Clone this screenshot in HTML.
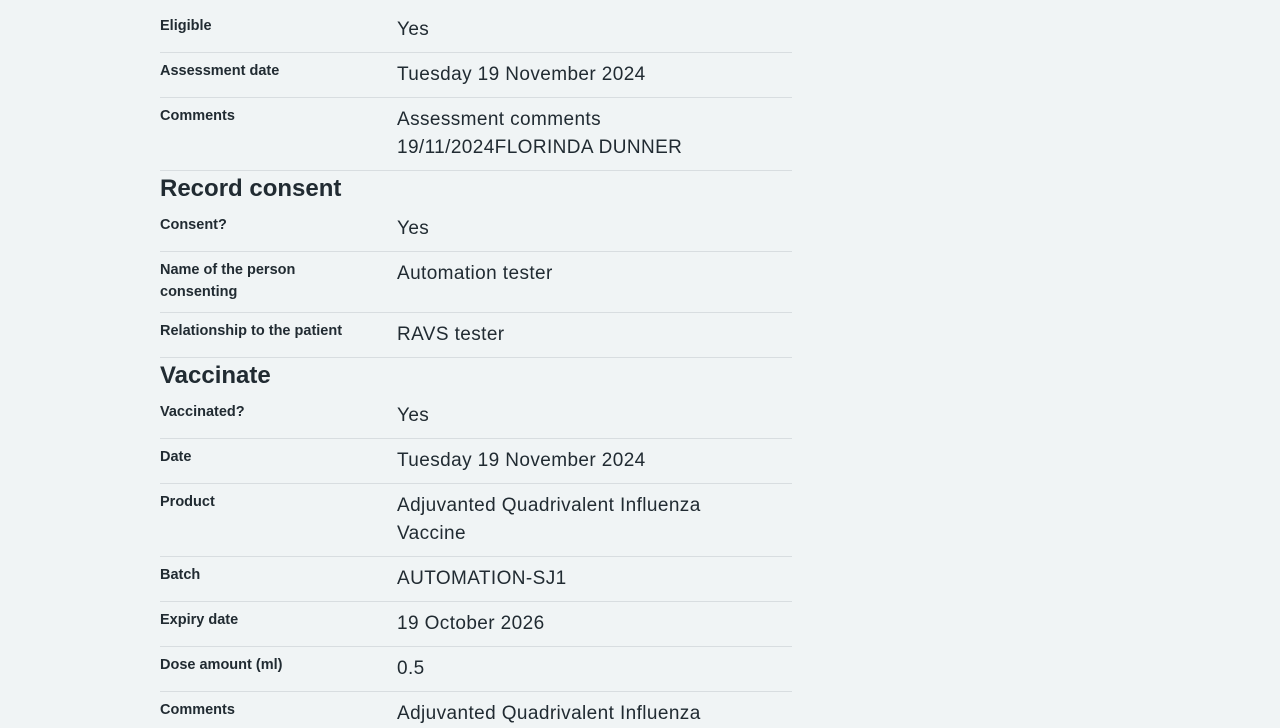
<!DOCTYPE html>
<html><head><meta charset="utf-8"><style>
body{margin:0;width:1280px;height:720px;overflow:hidden;background:#f0f4f5;color:#212b32;font-family:"Liberation Sans",sans-serif;position:relative}
.l{position:absolute;left:160px;width:220px;font-size:14.5px;font-weight:bold;line-height:22px;margin-top:1px}
.v{position:absolute;left:397px;width:395px;font-size:19px;line-height:28px;letter-spacing:0.4px;margin-top:2px}
.hr{position:absolute;left:160px;width:632px;height:1px;background:#d8dde0}
.h{position:absolute;left:160px;font-size:24px;font-weight:bold;line-height:32px;margin-top:1px}
</style></head><body>
<div class="h" style="top:-31px">Eligibility and assessment</div>
<div class="l" style="top:14px">Eligible</div><div class="v" style="top:14px">Yes</div>
<div class="hr" style="top:52px"></div>
<div class="l" style="top:59px">Assessment date</div><div class="v" style="top:59px">Tuesday 19 November 2024</div>
<div class="hr" style="top:97px"></div>
<div class="l" style="top:104px">Comments</div><div class="v" style="top:104px">Assessment comments<br>19/11/2024FLORINDA DUNNER</div>
<div class="hr" style="top:170px"></div>
<div class="h" style="top:172px">Record consent</div>
<div class="l" style="top:213px">Consent?</div><div class="v" style="top:213px">Yes</div>
<div class="hr" style="top:251px"></div>
<div class="l" style="top:258px">Name of the person<br>consenting</div><div class="v" style="top:258px">Automation tester</div>
<div class="hr" style="top:312px"></div>
<div class="l" style="top:319px">Relationship to the patient</div><div class="v" style="top:319px">RAVS tester</div>
<div class="hr" style="top:357px"></div>
<div class="h" style="top:359px">Vaccinate</div>
<div class="l" style="top:400px">Vaccinated?</div><div class="v" style="top:400px">Yes</div>
<div class="hr" style="top:438px"></div>
<div class="l" style="top:445px">Date</div><div class="v" style="top:445px">Tuesday 19 November 2024</div>
<div class="hr" style="top:483px"></div>
<div class="l" style="top:490px">Product</div><div class="v" style="top:490px">Adjuvanted Quadrivalent Influenza<br>Vaccine</div>
<div class="hr" style="top:556px"></div>
<div class="l" style="top:563px">Batch</div><div class="v" style="top:563px">AUTOMATION-SJ1</div>
<div class="hr" style="top:601px"></div>
<div class="l" style="top:608px">Expiry date</div><div class="v" style="top:608px">19 October 2026</div>
<div class="hr" style="top:646px"></div>
<div class="l" style="top:653px">Dose amount (ml)</div><div class="v" style="top:653px">0.5</div>
<div class="hr" style="top:691px"></div>
<div class="l" style="top:698px">Comments</div><div class="v" style="top:698px">Adjuvanted Quadrivalent Influenza</div>
</body></html>
